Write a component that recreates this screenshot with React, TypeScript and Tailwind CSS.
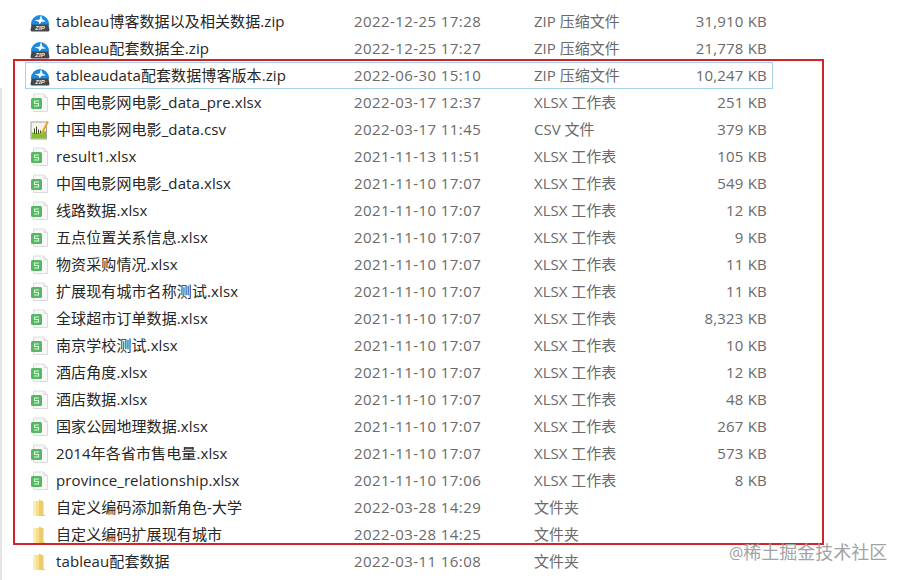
const zip = "zip";
const xl = "xlsx";
const csv = "csv";
const dir = "dir";

const files = [
  { icon: zip, name: "tableau博客数据以及相关数据.zip", date: "2022-12-25 17:28", type: "ZIP 压缩文件", size: "31,910 KB" },
  { icon: zip, name: "tableau配套数据全.zip", date: "2022-12-25 17:27", type: "ZIP 压缩文件", size: "21,778 KB" },
  { icon: zip, name: "tableaudata配套数据博客版本.zip", date: "2022-06-30 15:10", type: "ZIP 压缩文件", size: "10,247 KB", selected: true },
  { icon: xl, name: "中国电影网电影_data_pre.xlsx", date: "2022-03-17 12:37", type: "XLSX 工作表", size: "251 KB" },
  { icon: csv, name: "中国电影网电影_data.csv", date: "2022-03-17 11:45", type: "CSV 文件", size: "379 KB" },
  { icon: xl, name: "result1.xlsx", date: "2021-11-13 11:51", type: "XLSX 工作表", size: "105 KB" },
  { icon: xl, name: "中国电影网电影_data.xlsx", date: "2021-11-10 17:07", type: "XLSX 工作表", size: "549 KB" },
  { icon: xl, name: "线路数据.xlsx", date: "2021-11-10 17:07", type: "XLSX 工作表", size: "12 KB" },
  { icon: xl, name: "五点位置关系信息.xlsx", date: "2021-11-10 17:07", type: "XLSX 工作表", size: "9 KB" },
  { icon: xl, name: "物资采购情况.xlsx", date: "2021-11-10 17:07", type: "XLSX 工作表", size: "11 KB" },
  { icon: xl, name: "扩展现有城市名称测试.xlsx", date: "2021-11-10 17:07", type: "XLSX 工作表", size: "11 KB" },
  { icon: xl, name: "全球超市订单数据.xlsx", date: "2021-11-10 17:07", type: "XLSX 工作表", size: "8,323 KB" },
  { icon: xl, name: "南京学校测试.xlsx", date: "2021-11-10 17:07", type: "XLSX 工作表", size: "10 KB" },
  { icon: xl, name: "酒店角度.xlsx", date: "2021-11-10 17:07", type: "XLSX 工作表", size: "12 KB" },
  { icon: xl, name: "酒店数据.xlsx", date: "2021-11-10 17:07", type: "XLSX 工作表", size: "48 KB" },
  { icon: xl, name: "国家公园地理数据.xlsx", date: "2021-11-10 17:07", type: "XLSX 工作表", size: "267 KB" },
  { icon: xl, name: "2014年各省市售电量.xlsx", date: "2021-11-10 17:07", type: "XLSX 工作表", size: "573 KB" },
  { icon: xl, name: "province_relationship.xlsx", date: "2021-11-10 17:06", type: "XLSX 工作表", size: "8 KB" },
  { icon: dir, name: "自定义编码添加新角色-大学", date: "2022-03-28 14:29", type: "文件夹", size: "" },
  { icon: dir, name: "自定义编码扩展现有城市", date: "2022-03-28 14:25", type: "文件夹", size: "" },
  { icon: dir, name: "tableau配套数据", date: "2022-03-11 16:08", type: "文件夹", size: "" },
];

function ZipIcon() {
  return (
    <svg width="20" height="20" viewBox="0 0 20 20">
      <path d="M1 12 A9 9 0 0 1 19 12 V13 H1 Z" fill="#1a8be0" />
      <path d="M4.5 8 L9.5 7.8 L11 3 L12.5 7.5 L16 9.5 L11.5 9.8 L9.5 12.5 L9 10 Z" fill="#fff" />
      <path d="M1.5 12.5 H18.5 L19.5 18 Q19.5 19.5 18 19.5 H2 Q0.5 19.5 0.5 18 Z" fill="#44474c" />
      <text x="10" y="18" textAnchor="middle" fontSize="6" fontWeight="700" fontStyle="italic" fontFamily="Liberation Sans" fill="#f0f0f0">ZIP</text>
    </svg>
  );
}

function SheetIcon() {
  return (
    <svg width="20" height="20" viewBox="0 0 20 20">
      <path d="M3.5 1 H14 L17.5 4.5 V18.5 H3.5 Z" fill="#f8f8f8" stroke="#dcdcdc" />
      <path d="M14 1 V4.5 H17.5" fill="#ececec" stroke="#dcdcdc" />
      <rect x="1" y="5" width="11" height="11" rx="1.5" fill="#55b862" />
      <path d="M9 8 H4.5 V10.5 H8.5 V13 H4" fill="none" stroke="#dff3e1" strokeWidth="1.1" />
    </svg>
  );
}

function CsvIcon() {
  return (
    <svg width="20" height="20" viewBox="0 0 20 20">
      <rect x="1" y="2" width="15.5" height="17" fill="#f4f4ea" stroke="#a4a49a" />
      <path d="M1.5 12 C6 14 10 13 16 11 V18.5 H1.5 Z" fill="#86bf2f" />
      <path d="M4.5 14 V8.5 M6.5 14 V6.5 M8.5 13.5 V9.5 M10.5 13 V10.5" stroke="#3f4a2a" strokeWidth="1" />
      <path d="M11.5 14 L18 1.5" stroke="#e6a52c" strokeWidth="2" />
    </svg>
  );
}

function FolderIcon() {
  return (
    <svg width="20" height="20" viewBox="0 0 20 20">
      <path d="M3.5 3 H9 V18 H3.5 Z" fill="#f6de8c" />
      <path d="M9 1.5 L13.5 3.5 V16.5 L16 18 H9 Z" fill="#eccb6a" />
      <path d="M3.5 3 H6 V18 H3.5 Z" fill="#faecb4" />
    </svg>
  );
}

function FileIcon({ kind }: { kind: string }) {
  if (kind === "zip") return <ZipIcon />;
  if (kind === "xlsx") return <SheetIcon />;
  if (kind === "csv") return <CsvIcon />;
  return <FolderIcon />;
}

export default function App() {
  return (
    <div className="relative w-[908px] h-[580px] overflow-hidden bg-white pt-2 text-[15px] font-['Open_Sans','Noto_Sans_CJK_SC',sans-serif]">
      <div className="ml-[25px] w-[748px]">
        {files.map((f) => (
          <div
            key={f.name}
            className={`flex h-[27px] items-center border ${f.selected ? "border-[#a6d2ea]" : "border-transparent"}`}
          >
            <div className="ml-[4px] w-[26px] shrink-0">
              <FileIcon kind={f.icon} />
            </div>
            <div className="w-[298px] shrink-0 whitespace-nowrap tracking-[0.1px] text-[#262626]">{f.name}</div>
            <div className="w-[180px] shrink-0 whitespace-nowrap tracking-[0.42px] text-[#6a6a6a]">{f.date}</div>
            <div className="w-[140px] shrink-0 whitespace-nowrap text-[#6a6a6a]">{f.type}</div>
            <div className="w-[93px] shrink-0 whitespace-nowrap text-right tracking-[0.2px] text-[#6a6a6a]">{f.size}</div>
          </div>
        ))}
      </div>
      {/* nav pane edge on the left */}
      <div className="absolute bottom-0 left-0 top-[88px] w-[2px] bg-[#e4e4e4]" />
      {/* red highlight drawn over the list */}
      <div className="absolute left-[13px] top-[59px] h-[486px] w-[811px] border-2 border-[#d3232c]" />
      <div className="absolute left-[729px] top-[541px] text-[18px] leading-[22px] whitespace-nowrap text-[#a3a3a3]">
        <span className="text-[16px]">@</span>稀土掘金技术社区
      </div>
    </div>
  );
}
